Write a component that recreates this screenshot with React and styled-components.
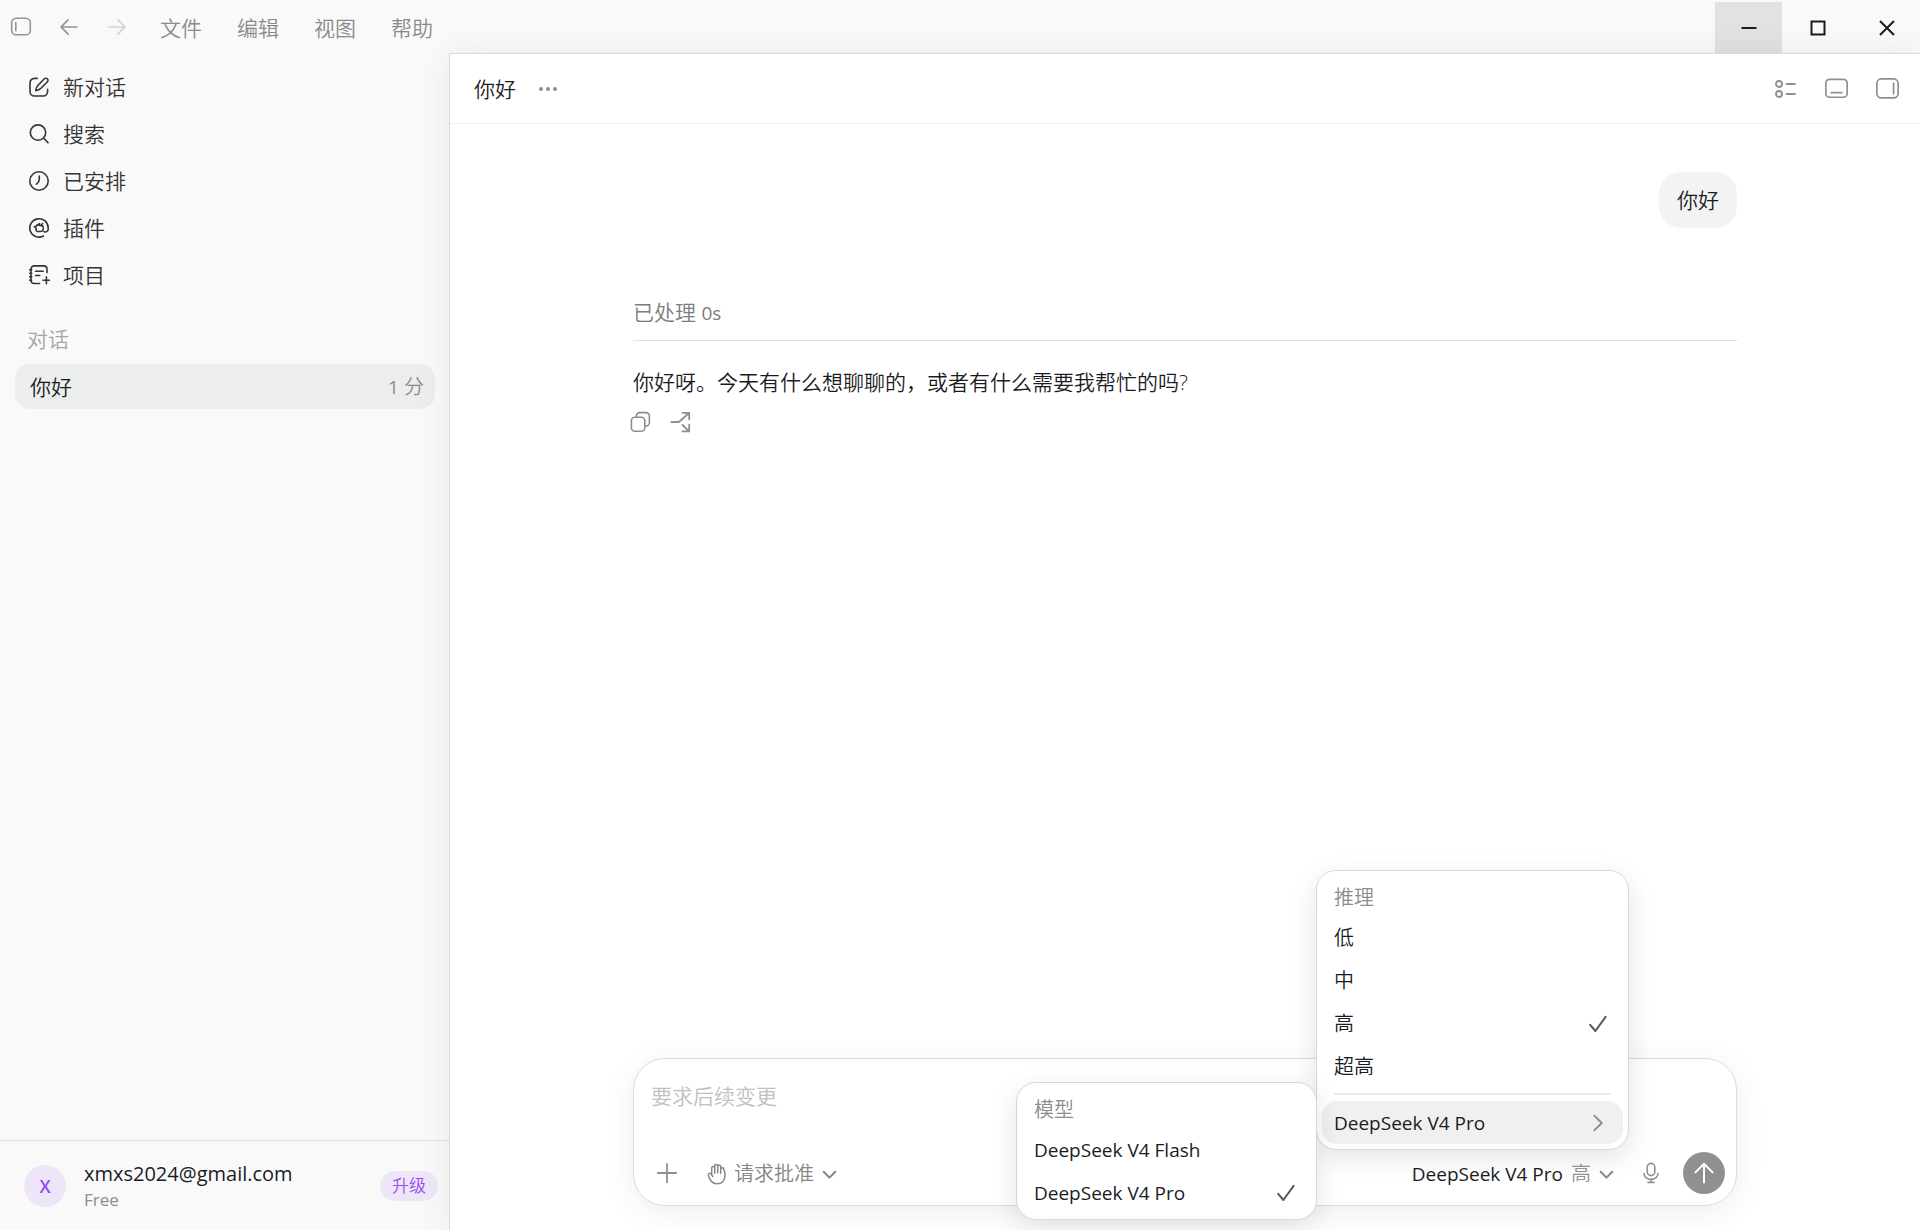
import React, { useState } from "react"
import styled, { createGlobalStyle } from "styled-components"

const icons = {
  sidebar: (
    <>
      <rect x="1.7" y="2.2" width="18.6" height="16.6" rx="4.4" />
      <path d="M5.8 6.8v8" />
    </>
  ),
  back: <path d="M19.5 11H2.5M10 3.2 2.2 11l7.8 7.8" />,
  forward: <path d="M2.5 11h17M12 3.2l7.8 7.8-7.8 7.8" />,
  compose: (
    <>
      <path d="M9.2 2.4H6.4a4.4 4.4 0 0 0-4.4 4.4v8.8A4.4 4.4 0 0 0 6.4 20h8.8a4.4 4.4 0 0 0 4.4-4.4v-2.2" />
      <path d="M7.8 14.6c.2-2.4.9-4 2.2-5.3l6.4-6.5a2.1 2.1 0 0 1 3 3L13 12.3c-1.3 1.3-2.9 2-5.2 2.3Z" />
    </>
  ),
  search: (
    <>
      <circle cx="10" cy="9.6" r="7.7" />
      <path d="m15.6 15.2 4.4 4.4" />
    </>
  ),
  clock: (
    <>
      <circle cx="11" cy="11" r="9.2" />
      <path d="M11.3 6v3.6c0 1.7-.9 3-2.8 4.6" />
    </>
  ),
  plugin: (
    <>
      <path d="M15.4 19A9.2 9.2 0 1 1 20.2 11v1.2a2.8 2.8 0 0 1-4.3 2.3" />
      <path d="M9.6 7.6 7 10.2l1.1 1.1v2.1l1.1 1.1h3a3.3 3.3 0 0 0 2.3-5.6l-1.1-1.1 1.2-1.2M9.8 8.2l1.7-1.7v2l1.8.2M7 10.2l-.7-.7" />
    </>
  ),
  project: (
    <>
      <path d="M19 8.4V5.2a3.3 3.3 0 0 0-3.3-3.3H6.3A3.3 3.3 0 0 0 3 5.2v11a3.3 3.3 0 0 0 3.3 3.3h5.2" />
      <path d="M7.6 7.2h7.6M7.6 11.5h4.2M1.7 5.8h2M1.7 9.3h2M1.7 12.8h2M1.7 16.2h2M18.4 12.9v6.8M15 16.3h6.8" />
    </>
  ),
  dots: (
    <g fill="currentColor" stroke="none">
      <circle cx="4" cy="11" r="2" />
      <circle cx="11" cy="11" r="2" />
      <circle cx="18" cy="11" r="2" />
    </g>
  ),
  list: (
    <>
      <circle cx="4" cy="6" r="3" />
      <circle cx="4" cy="16" r="3" />
      <path d="M11.5 6h8.5M11.5 16h8.5" />
    </>
  ),
  bottomPanel: (
    <>
      <rect x="0.8" y="2.2" width="20.4" height="17.2" rx="3.6" />
      <path d="M6 15h10" />
    </>
  ),
  sidePanel: (
    <>
      <rect x="0.8" y="1.8" width="20.4" height="18.2" rx="4.4" />
      <path d="M16.8 6v10" />
    </>
  ),
  copy: (
    <>
      <path d="M6.4 6V5a3.4 3.4 0 0 1 3.4-3.4H16A3.4 3.4 0 0 1 19.4 5v6.6A3.4 3.4 0 0 1 16 15h-1" />
      <rect x="1.4" y="6.2" width="13.4" height="14" rx="3.4" />
    </>
  ),
  fork: (
    <path d="M1.4 11h7.5L19 2M12.6 1.8h6.6v6.6M12.6 14l6.2 6.2M12.4 20.4h6.8v-6.8" />
  ),
  plus: <path d="M11 1.8v18.4M1.8 11h18.4" />,
  hand: (
    <path d="M5.7 12.2V5a1.5 1.5 0 0 1 3 0v5.2M8.7 9.8V3a1.5 1.5 0 0 1 3 0v6.8M11.7 9.8V3.6a1.5 1.5 0 0 1 3 0v6.6M14.7 10.2V6.2a1.5 1.5 0 0 1 3 0l1.2 3v3.6c0 5-3.3 8-7.5 8-4 0-6.3-2-7.8-5.2L2.4 12a1.5 1.5 0 0 1 2.6-1.3l1.9 2.9" />
  ),
  chevronDown: <path d="m4.3 7.8 6.7 6.8 6.7-6.8" />,
  chevronRight: <path d="m7.2 3.6 7.6 7.4-7.6 7.4" />,
  check: <path d="m3.2 11.8 5.2 6.2L18.6 3.8" />,
  mic: (
    <>
      <rect x="7.2" y="1.4" width="7.6" height="12.2" rx="3.8" />
      <path d="M4 11.6a7 5.8 0 0 0 14 0M11 17.4v3M8 20.4h6" />
    </>
  ),
  send: <path d="M11 20.5V1.8M2.4 10.4 11 1.8l8.6 8.6" />,
  minimize: <path d="M3.5 11h15" />,
  maximize: <rect x="4.5" y="4.5" width="13" height="13" />,
  close: <path d="m4 4 14 14M18 4 4 18" />,
}

const Icon = ({ name, size = 22, stroke = 1.6, sharp }) => (
  <svg
    width={size}
    height={size}
    viewBox="0 0 22 22"
    fill="none"
    stroke="currentColor"
    strokeWidth={stroke}
    strokeLinecap={sharp ? "butt" : "round"}
    strokeLinejoin={sharp ? "miter" : "round"}
    aria-hidden="true"
  >
    {icons[name]}
  </svg>
)

const menus = ["文件", "编辑", "视图", "帮助"]

const navItems = [
  { icon: "compose", label: "新对话" },
  { icon: "search", label: "搜索" },
  { icon: "clock", label: "已安排" },
  { icon: "plugin", label: "插件" },
  { icon: "project", label: "项目" },
]

const efforts = ["低", "中", "高", "超高"]
const models = ["DeepSeek V4 Flash", "DeepSeek V4 Pro"]

const TitleBar = () => (
  <Bar>
    <BarTools>
      <BarButton aria-label="Toggle sidebar">
        <Icon name="sidebar" />
      </BarButton>
      <BarButton aria-label="Back">
        <Icon name="back" size={20} stroke={1.9} />
      </BarButton>
      <BarButton aria-label="Forward" $faded>
        <Icon name="forward" size={20} stroke={1.9} />
      </BarButton>
    </BarTools>
    <MenuBar>
      {menus.map(menu => (
        <MenuBarButton key={menu}>{menu}</MenuBarButton>
      ))}
    </MenuBar>
    <WindowControls>
      <WindowButton aria-label="Minimize" $active>
        <Icon name="minimize" stroke={2} sharp />
      </WindowButton>
      <WindowButton aria-label="Maximize">
        <Icon name="maximize" stroke={2} sharp />
      </WindowButton>
      <WindowButton aria-label="Close">
        <Icon name="close" stroke={2} sharp />
      </WindowButton>
    </WindowControls>
  </Bar>
)

const Sidebar = () => (
  <SidebarWrapper>
    <Nav>
      {navItems.map(({ icon, label }) => (
        <NavButton key={label}>
          <Icon name={icon} />
          {label}
        </NavButton>
      ))}
    </Nav>
    <SectionTitle>对话</SectionTitle>
    <ChatLink href="#chat">
      <span>你好</span>
      <ChatTime>
        <Latin>1</Latin> 分
      </ChatTime>
    </ChatLink>
    <Account>
      <Avatar>X</Avatar>
      <AccountText>
        <Email>xmxs2024@gmail.com</Email>
        <Plan>Free</Plan>
      </AccountText>
      <UpgradeButton>升级</UpgradeButton>
    </Account>
  </SidebarWrapper>
)

const ModelPicker = () => {
  const [effort, setEffort] = useState("高")
  const [model, setModel] = useState("DeepSeek V4 Pro")

  return (
    <Picker>
      <PickerButton aria-haspopup="menu" aria-expanded="true">
        <Latin>{model}</Latin>
        <Muted>{effort}</Muted>
        <Icon name="chevronDown" stroke={2.4} size={19} />
      </PickerButton>
      <EffortMenu role="menu">
        <MenuLabel>推理</MenuLabel>
        {efforts.map(item => (
          <MenuItem
            key={item}
            role="menuitemradio"
            aria-checked={item === effort}
            onClick={() => setEffort(item)}
          >
            {item}
            {item === effort && <Icon name="check" stroke={2} />}
          </MenuItem>
        ))}
        <MenuDivider />
        <MenuItem role="menuitem" aria-haspopup="menu" $active>
          <Latin>{model}</Latin>
          <ArrowSlot>
            <Icon name="chevronRight" stroke={1.8} />
          </ArrowSlot>
        </MenuItem>
        <ModelMenu role="menu">
          <MenuLabel>模型</MenuLabel>
          {models.map(item => (
            <MenuItem
              key={item}
              role="menuitemradio"
              aria-checked={item === model}
              onClick={() => setModel(item)}
            >
              <Latin>{item}</Latin>
              {item === model && <Icon name="check" stroke={2} />}
            </MenuItem>
          ))}
        </ModelMenu>
      </EffortMenu>
    </Picker>
  )
}

const Composer = () => (
  <ComposerBox>
    <ComposerInput aria-label="要求后续变更" placeholder="要求后续变更" rows={1} />
    <ComposerTools>
      <RoundButton aria-label="Add">
        <Icon name="plus" stroke={1.8} />
      </RoundButton>
      <ApprovalButton>
        <Icon name="hand" stroke={1.5} />
        <span>请求批准</span>
        <Icon name="chevronDown" stroke={2.4} size={19} />
      </ApprovalButton>
      <Spacer />
      <ModelPicker />
      <RoundButton aria-label="Voice input">
        <Icon name="mic" />
      </RoundButton>
      <SendButton aria-label="Send">
        <Icon name="send" stroke={2} />
      </SendButton>
    </ComposerTools>
  </ComposerBox>
)

const App = () => (
  <>
    <GlobalStyle />
    <Window>
      <TitleBar />
      <Body>
        <Sidebar />
        <Main>
          <Header>
            <Title>你好</Title>
            <IconButton aria-label="More">
              <Icon name="dots" />
            </IconButton>
            <HeaderTools>
              <IconButton aria-label="Tasks">
                <Icon name="list" stroke={1.8} />
              </IconButton>
              <IconButton aria-label="Bottom panel">
                <Icon name="bottomPanel" size={23} />
              </IconButton>
              <IconButton aria-label="Side panel">
                <Icon name="sidePanel" size={23} />
              </IconButton>
            </HeaderTools>
          </Header>
          <Thread id="chat">
            <Bubble>你好</Bubble>
            <Status>
              已处理 <Latin>0s</Latin>
            </Status>
            <Reply>你好呀。今天有什么想聊聊的，或者有什么需要我帮忙的吗?</Reply>
            <ReplyTools>
              <IconButton aria-label="Copy">
                <Icon name="copy" />
              </IconButton>
              <IconButton aria-label="Branch">
                <Icon name="fork" stroke={1.8} />
              </IconButton>
            </ReplyTools>
          </Thread>
          <Composer />
        </Main>
      </Body>
    </Window>
  </>
)

export default App

const GlobalStyle = createGlobalStyle`
  * {
    box-sizing: border-box;
  }

  body {
    margin: 0;
    background: #f9f9f9;
    color: #1a1c1f;
    font-family: "Open Sans", "Noto Sans CJK SC", sans-serif;
    font-size: 21px;
    font-weight: 350;
    line-height: 30px;
  }

  button,
  textarea {
    font: inherit;
    color: inherit;
    border: 0;
    padding: 0;
    background: none;
  }

  svg {
    display: block;
    flex-shrink: 0;
  }
`

const Window = styled.div`
  display: flex;
  flex-direction: column;
  min-height: 100vh;
  overflow: hidden;
`

const Bar = styled.header`
  display: flex;
  height: 53px;
`

const BarTools = styled.div`
  display: flex;
  align-items: center;
  gap: 26px;
  padding-left: 10px;
`

const BarButton = styled.button`
  display: flex;
  justify-content: center;
  width: 22px;
  color: ${({ $faded }) => ($faded ? "#d2d2d2" : "#939393")};
`

const MenuBar = styled.nav`
  display: flex;
  align-items: center;
  gap: 35px;
  margin-left: 32px;
`

const MenuBarButton = styled.button`
  padding-top: 2px;
  color: #8a8a8a;
`

const WindowControls = styled.div`
  display: flex;
  gap: 2px;
  margin-left: auto;
  padding-top: 2px;
`

const WindowButton = styled.button`
  display: flex;
  align-items: center;
  justify-content: center;
  width: 67px;
  background: ${({ $active }) => ($active ? "#e2e2e2" : "transparent")};
`

const Body = styled.div`
  display: grid;
  grid-template-columns: 449px 1fr;
  flex: 1;
`

const SidebarWrapper = styled.aside`
  display: flex;
  flex-direction: column;
  padding-top: 10px;
`

const Nav = styled.nav`
  display: flex;
  flex-direction: column;
`

const NavButton = styled.button`
  display: flex;
  align-items: center;
  gap: 13px;
  height: 47px;
  padding-left: 28px;
  color: #353535;
`

const SectionTitle = styled.h2`
  margin: 26px 0 10px;
  padding-left: 27px;
  color: #a6a6a6;
  font-size: 21px;
  font-weight: 350;
`

const ChatLink = styled.a`
  display: flex;
  align-items: center;
  justify-content: space-between;
  height: 45px;
  margin: 0 14px 0 15px;
  padding: 0 11px 0 15px;
  border-radius: 15px;
  background: #eceeed;
  color: inherit;
  text-decoration: none;
`

const ChatTime = styled.span`
  color: #8a8c8b;
  font-size: 20px;
`

const Account = styled.div`
  display: flex;
  align-items: center;
  height: 90px;
  margin-top: auto;
  padding: 0 11px 0 24px;
  border-top: 1px solid #dfdfdf;
`

const Avatar = styled.div`
  display: flex;
  align-items: center;
  justify-content: center;
  width: 42px;
  height: 42px;
  border-radius: 50%;
  background: #eee6f8;
  color: #924ff7;
  font-size: 18px;
  font-weight: 600;
`

const AccountText = styled.div`
  display: flex;
  flex-direction: column;
  margin-left: 18px;
  font-weight: 400;
`

const Email = styled.span`
  font-size: 20px;
  line-height: 28px;
`

const Plan = styled.span`
  color: #8d8d8d;
  font-size: 17px;
  line-height: 24px;
`

const UpgradeButton = styled.button`
  height: 30px;
  margin-left: auto;
  padding: 0 12px;
  border-radius: 15px;
  background: #eee6f8;
  color: #924ff7;
  font-size: 17px;
  line-height: 30px;
`

const Main = styled.main`
  position: relative;
  display: flex;
  flex-direction: column;
  border: solid #dadada;
  border-width: 1px 0 0 1px;
  background: #fff;
  box-shadow: 0 0 32px rgba(0, 0, 0, 0.07);
`

const Header = styled.header`
  display: flex;
  align-items: center;
  height: 70px;
  padding: 0 21px 0 24px;
  border-bottom: 1px solid #f0f0f0;
`

const Title = styled.h1`
  margin: 0 21px 0 0;
  font-size: 21px;
  font-weight: 350;
`

const IconButton = styled.button`
  display: flex;
  color: #8f8f8f;
`

const HeaderTools = styled.div`
  display: flex;
  align-items: center;
  gap: 28px;
  margin-left: auto;
`

const Thread = styled.section`
  display: flex;
  flex-direction: column;
  flex: 1;
  width: calc(100% - 64px);
  max-width: 1104px;
  margin: 0 auto;
  padding-top: 48px;
`

const Bubble = styled.p`
  align-self: flex-end;
  margin: 0;
  padding: 13px 18px;
  border-radius: 22px;
  background: #f3f3f3;
`

const Status = styled.p`
  margin: 69px 0 0;
  padding-bottom: 12px;
  border-bottom: 1px solid #dfdfdf;
  color: #7c7c7c;
`

const Reply = styled.p`
  margin: 26px 0 0;
`

const ReplyTools = styled.div`
  display: flex;
  gap: 18px;
  margin: 14px 0 0 -3px;
`

const ComposerBox = styled.section`
  display: flex;
  flex-direction: column;
  justify-content: space-between;
  width: calc(100% - 64px);
  max-width: 1104px;
  height: 148px;
  margin: 0 auto 24px;
  padding: 22px 11px 11px;
  border: 1px solid #dcdcdc;
  border-radius: 32px;
  background: #fff;
  box-shadow: 0 6px 32px rgba(0, 0, 0, 0.07);
`

const ComposerInput = styled.textarea`
  padding: 0 6px;
  resize: none;
  outline: none;
  overflow: hidden;

  &::placeholder {
    color: #c0c0c0;
  }
`

const ComposerTools = styled.div`
  display: flex;
  align-items: center;
`

const RoundButton = styled.button`
  display: flex;
  align-items: center;
  justify-content: center;
  width: 43px;
  height: 42px;
  color: #8f9092;
`

const ApprovalButton = styled.button`
  display: flex;
  align-items: center;
  gap: 6px;
  height: 42px;
  margin-left: 18px;
  padding-top: 2px;
  color: #858688;
  font-size: 20px;
`

const Spacer = styled.div`
  flex: 1;
`

const Picker = styled.div`
  position: relative;
`

const PickerButton = styled.button`
  display: flex;
  align-items: center;
  height: 42px;
  padding: 2px 13px 0 0;
  font-size: 20px;

  svg {
    margin-left: 6px;
    color: #8a8b8d;
  }
`

const Latin = styled.span`
  font-size: 19px;
  font-weight: 400;
`

const Muted = styled.span`
  margin-left: 8px;
  color: #949494;
`

const Popup = styled.div`
  position: absolute;
  display: flex;
  flex-direction: column;
  padding: 5px;
  border: 1px solid #d8d8d8;
  border-radius: 20px;
  background: #fff;
  font-size: 20px;
  box-shadow: 0 8px 28px rgba(0, 0, 0, 0.11);
`

const EffortMenu = styled(Popup)`
  right: 0;
  bottom: calc(100% + 2px);
  width: 313px;
`

const ModelMenu = styled(Popup)`
  right: 100%;
  bottom: -71px;
  width: 301px;
`

const MenuLabel = styled.div`
  height: 40px;
  padding: 7px 12px 0;
  color: #8c8c8c;
`

const MenuItem = styled.button`
  display: flex;
  align-items: center;
  justify-content: space-between;
  height: 43px;
  padding: 0 14px 0 12px;
  border-radius: 15px;
  background: ${({ $active }) => ($active ? "#f0f0f0" : "transparent")};
  text-align: left;

  svg {
    color: #57585a;
  }
`

const ArrowSlot = styled.span`
  svg {
    color: #8a8b8d;
  }
`

const MenuDivider = styled.hr`
  width: calc(100% - 24px);
  height: 2px;
  margin: 5px 12px 6px;
  border: 0;
  background: #ebebeb;
`

const SendButton = styled.button`
  display: flex;
  align-items: center;
  justify-content: center;
  width: 42px;
  height: 42px;
  margin-left: 11px;
  border-radius: 50%;
  background: #8f9092;
  color: #fff;
`
